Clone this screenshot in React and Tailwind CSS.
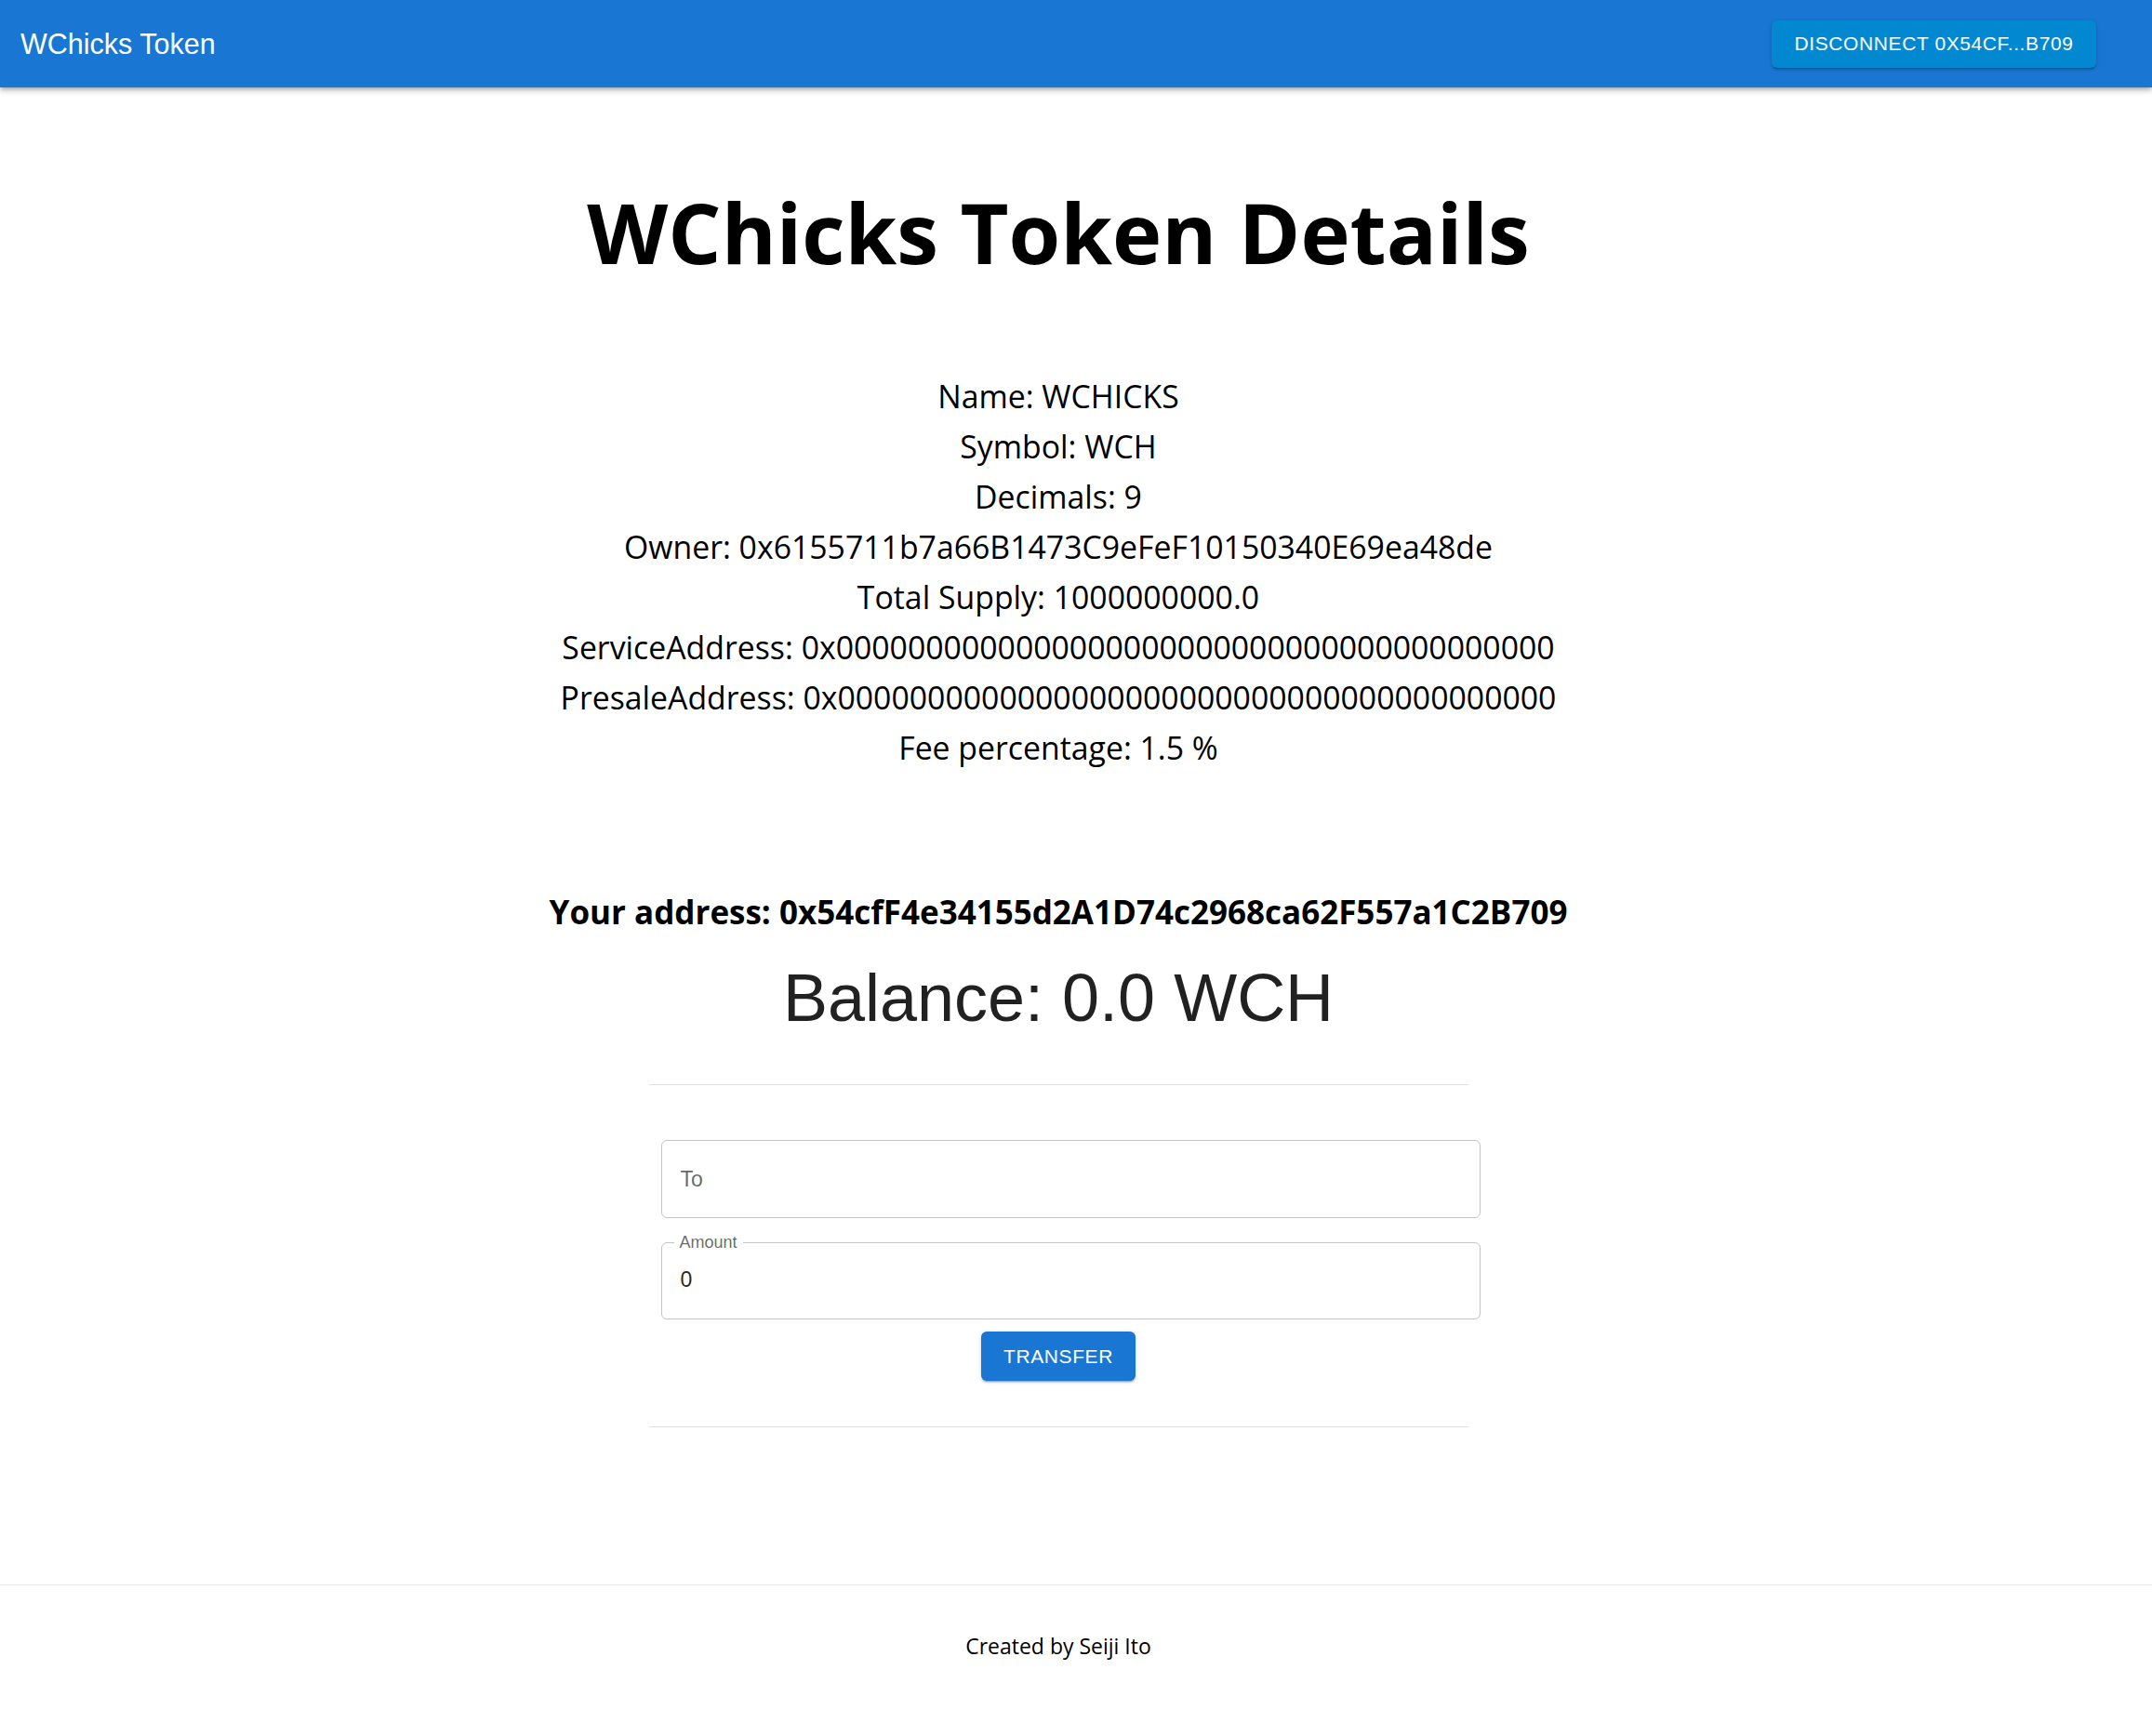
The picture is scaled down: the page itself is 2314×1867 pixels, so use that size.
import React from "react";

const sans = "font-['Open_Sans','Noto_Sans',sans-serif]";
const mui = "font-['Liberation_Sans',Arial,sans-serif]";

const details = [
  "Name: WCHICKS",
  "Symbol: WCH",
  "Decimals: 9",
  "Owner: 0x6155711b7a66B1473C9eFeF10150340E69ea48de",
  "Total Supply: 1000000000.0",
  "ServiceAddress: 0x0000000000000000000000000000000000000000",
  "PresaleAddress: 0x0000000000000000000000000000000000000000",
  "Fee percentage: 1.5 %",
];

function AppBar() {
  return (
    <header className="relative z-10 flex h-[94px] items-center justify-between bg-[#1976d2] pl-[22px] pr-[60px] text-white shadow-[0_2px_4px_-1px_rgba(0,0,0,0.2),0_4px_5px_0_rgba(0,0,0,0.14),0_1px_10px_0_rgba(0,0,0,0.12)]">
      <h6 className={`${mui} text-[30.5px] leading-none`}>WChicks Token</h6>
      <button
        className={`${mui} flex h-[51px] w-[349px] items-center justify-center rounded-[6px] bg-[#0288d1] text-[21px] tracking-[0.6px] text-white shadow-[0_3px_1px_-2px_rgba(0,0,0,0.2),0_2px_2px_0_rgba(0,0,0,0.14),0_1px_5px_0_rgba(0,0,0,0.12)]`}
      >
        DISCONNECT 0X54CF...B709
      </button>
    </header>
  );
}

function TransferForm() {
  return (
    <div className="ml-[26px] flex w-[881px] flex-col items-center">
      {/* To */}
      <div className="mt-[59px] flex h-[84px] w-full items-center rounded-[6px] border border-[#c4c4c4] px-[20px]">
        <span className={`${mui} text-[23px] text-[rgba(0,0,0,0.6)]`}>To</span>
      </div>

      {/* Amount, outlined with notch */}
      <fieldset className="mt-[16px] h-[93px] w-full rounded-[6px] border border-[#c4c4c4] px-[13px] pb-0">
        <legend className={`${mui} px-[6px] text-[18px] leading-[20px] text-[rgba(0,0,0,0.6)]`}>Amount</legend>
        <div className={`${mui} px-[7px] pt-[13px] text-[23px] text-[rgba(0,0,0,0.87)]`}>0</div>
      </fieldset>

      <button
        className={`${mui} mr-[26px] mt-[13px] flex h-[53px] w-[166px] items-center justify-center rounded-[6px] bg-[#1976d2] text-[21px] tracking-[0.6px] text-white shadow-[0_3px_1px_-2px_rgba(0,0,0,0.2),0_2px_2px_0_rgba(0,0,0,0.14),0_1px_5px_0_rgba(0,0,0,0.12)]`}
      >
        TRANSFER
      </button>
    </div>
  );
}

export default function App() {
  return (
    <div className="min-h-[1867px] bg-white">
      <AppBar />

      <main className="mr-[38px] flex flex-col items-center">
        <h1 className={`${sans} mt-[95px] text-[90px] font-bold leading-[120px] text-black`}>
          WChicks Token Details
        </h1>

        <div className={`${sans} mt-[90px] flex flex-col items-center text-[33.8px] leading-[54px] text-black`}>
          {details.map((d) => (
            <p key={d}>{d}</p>
          ))}
        </div>

        <h3 className={`${sans} mt-[125px] text-[35px] font-bold leading-[50px] text-black`}>
          Your address: 0x54cfF4e34155d2A1D74c2968ca62F557a1C2B709
        </h3>

        <h2 className={`${mui} mt-[22px] text-[72px] leading-[90px] text-[rgba(0,0,0,0.87)]`}>
          Balance: 0.0 WCH
        </h2>

        <div className="mt-[48px] w-[881px] border-t border-[#e0e0e0]" />

        <TransferForm />

        <div className="mt-[49px] w-[881px] border-t border-[#e0e0e0]" />
      </main>

      <footer className="mt-[169px] border-t border-[#e8e8e8] pt-[47px]">
        <p className={`${sans} mr-[38px] text-center text-[23px] leading-[36px] text-black`}>
          Created by Seiji Ito
        </p>
      </footer>
    </div>
  );
}
